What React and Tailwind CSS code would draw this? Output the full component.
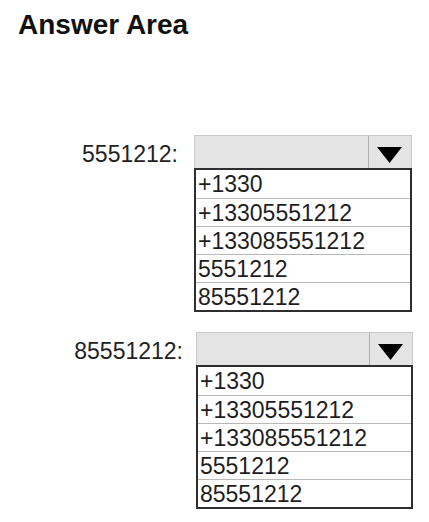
const options = ['+1330', '+13305551212', '+133085551212', '5551212', '85551212']

function Dropdown({ label, labelClass, boxClass }) {
  return (
    <div className="flex items-start">
      <div className={`flex h-[33px] items-center justify-end pt-[6px] text-[23px] leading-none text-[#222] ${labelClass}`}>
        {label}
      </div>
      <div className={boxClass}>
        <div className="flex h-[33px] border border-b-0 border-[#c9c9c9] bg-[#e4e4e4]">
          <div className="flex-1" />
          <div className="flex w-[43px] items-end justify-center border-l border-[#b0b0b0] pb-[5px] pr-[2px]">
            <svg width="25" height="16" viewBox="0 0 25 16">
              <polygon points="0,0 25,0 12.5,16" fill="#000" />
            </svg>
          </div>
        </div>
        <ul className="border-2 border-[#2e2e2e] bg-white">
          {options.map((opt, i) => (
            <li
              key={opt}
              className={`flex h-[28px] items-center pl-[2px] pt-[1px] text-[23px] leading-none text-[#1e1e1e] ${i > 0 ? 'border-t border-[#b8b8b8]' : ''}`}
            >
              {opt}
            </li>
          ))}
        </ul>
      </div>
    </div>
  )
}

export default function App() {
  return (
    <div className="min-h-[522px] w-[429px] bg-white font-['Liberation_Sans',Arial,sans-serif]">
      <h1 className="pl-[18px] pt-[11px] text-[28px] font-bold leading-none text-[#111]">Answer Area</h1>
      <div className="mt-[96px] flex flex-col gap-[20px]">
        <Dropdown label="5551212:" labelClass="w-[178px]" boxClass="ml-[16px] w-[218px]" />
        <Dropdown label="85551212:" labelClass="w-[183px]" boxClass="ml-[13px] w-[217px]" />
      </div>
    </div>
  )
}
